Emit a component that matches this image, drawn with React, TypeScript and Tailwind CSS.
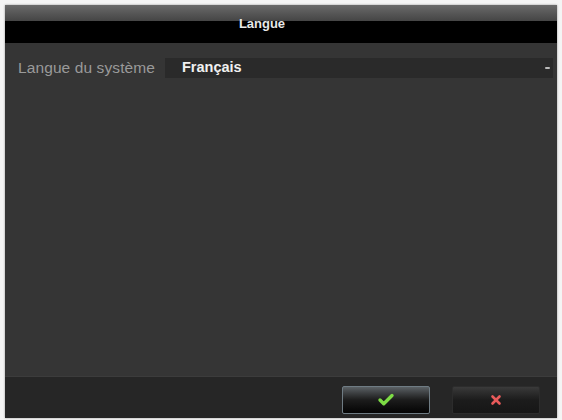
import { Check, X } from "lucide-react";

const font = "font-['Liberation_Sans',Arial,sans-serif]";

export default function App() {
  return (
    <div className={`h-[420px] w-[562px] bg-[#f4f4f4] pl-[5px] pr-[5px] pt-[5px] pb-[2px] ${font}`}>
      <div className="flex h-full flex-col bg-[#353535] shadow-[0_0_2px_#999]">
        {/* header */}
        <div className="relative h-[38px] bg-black">
          <div className="h-[16px] bg-gradient-to-b from-[#6a6a6a] to-[#454545]" />
          <div className="absolute inset-0 flex items-center justify-center pr-[38px] text-[13px] font-bold text-[#e8e8e8]">
            Langue
          </div>
        </div>

        {/* content */}
        <div className="flex-1 pl-[10px] pr-[4px] pt-[15px]">
          <div className="flex h-[20px] items-center">
            <div className="w-[150px] pl-[3px] text-[15.5px] tracking-[0.1px] text-[#9a9a9a]">Langue du système</div>
            <div className="flex h-full flex-1 items-center justify-between bg-[#2a2a2a] pl-[17px] pr-[3px]">
              <span className="text-[14.5px] font-bold text-[#f0f0f0]">Français</span>
              <span className="h-[2px] w-[5px] rounded-full bg-[#bbbbbb]" />
            </div>
          </div>
        </div>

        {/* footer */}
        <div className="flex h-[42px] items-center justify-end gap-[22px] border-t border-[#3c3c3c] bg-[#262626] pr-[17px] pt-[5px]">
          <button className="flex h-[28px] w-[88px] items-center justify-center rounded-[2px] border border-[#6f7c84] bg-gradient-to-b from-[#5c6266] via-[#1c1c1c] to-[#050505]">
            <Check className="h-[18px] w-[18px] text-[#7ddc45]" strokeWidth={4.5} />
          </button>
          <button className="flex h-[28px] w-[88px] items-center justify-center rounded-[2px] border border-[#2c2c2c] bg-gradient-to-b from-[#3a3a3a] via-[#1c1c1c] to-[#161616]">
            <X className="h-[14px] w-[14px] text-[#e85a5a]" strokeWidth={4.5} />
          </button>
        </div>
      </div>
    </div>
  );
}
